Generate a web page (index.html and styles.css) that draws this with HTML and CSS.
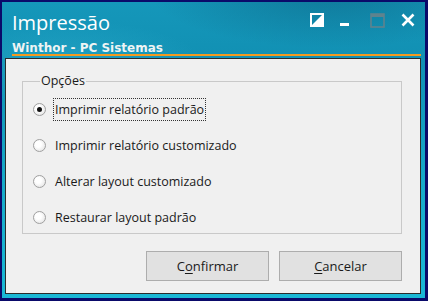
FILE: index.html
```html
<!DOCTYPE html>
<html lang="pt">
<head>
  <meta charset="UTF-8">
  <title>Impressão</title>
  <link rel="stylesheet" href="styles.css">
</head>
<body>

<!-- Janela de impressao -->
<div class="window">
  <div class="frame">
    <div class="titlebar">
      <div class="title-text">
        <h1 class="title">Impressão</h1>
        <div class="subtitle">Winthor - PC Sistemas</div>
      </div>
      <div class="title-buttons">
        <svg class="tb-icon" width="14" height="14" viewBox="0 0 14 14">
          <rect x="1" y="1" width="12" height="12" fill="none" stroke="#fff" stroke-width="2"/>
          <polygon points="13,1 13,13 1,13" fill="#fff"/>
        </svg>
        <svg class="tb-icon tb-min" width="10" height="14" viewBox="0 0 10 14">
          <rect x="0" y="10" width="9" height="3" fill="#fff"/>
        </svg>
        <svg class="tb-icon tb-max" width="15" height="15" viewBox="0 0 15 15">
          <rect x="1" y="1" width="13" height="13" fill="none" stroke="#5f838e" stroke-width="1.6"/>
          <rect x="1" y="1" width="13" height="3" fill="#5f838e"/>
        </svg>
        <svg class="tb-icon" width="14" height="14" viewBox="0 0 14 14">
          <path d="M1.5 1.5 L12.5 12.5 M12.5 1.5 L1.5 12.5" stroke="#fff" stroke-width="2.6"/>
        </svg>
      </div>
    </div>
    <div class="accent"></div>

    <div class="panel">
      <fieldset class="options">
        <legend>Opções</legend>
        <label class="option">
          <span class="radio checked"></span>
          <span class="label focus">Imprimir relatório padrão</span>
        </label>
        <label class="option">
          <span class="radio"></span>
          <span class="label">Imprimir relatório customizado</span>
        </label>
        <label class="option">
          <span class="radio"></span>
          <span class="label">Alterar layout customizado</span>
        </label>
        <label class="option">
          <span class="radio"></span>
          <span class="label">Restaurar layout padrão</span>
        </label>
      </fieldset>

      <div class="actions">
        <button class="btn">C<u>o</u>nfirmar</button>
        <button class="btn"><u>C</u>ancelar</button>
      </div>
    </div>
  </div>
</div>

</body>
</html>
```

FILE: styles.css
```css
/* --- Janela --- */
body {
  margin: 0;
  font-family: "Open Sans", "DejaVu Sans", sans-serif;
}

.window {
  width: 428px;
  height: 301px;
  box-sizing: border-box;
  background-color: #0a0a6a;
  padding: 2px 3px 3px 2px;
}

.frame {
  height: 100%;
  box-sizing: border-box;
  padding: 0 4px 4px 3px;
  display: flex;
  flex-direction: column;
  background:
    radial-gradient(ellipse 260px 80px at 330px -10px, rgba(10,90,120,0.5), rgba(10,90,120,0) 70%),
    radial-gradient(ellipse 200px 60px at 60px 60px, rgba(60,190,220,0.35), rgba(60,190,220,0) 70%),
    linear-gradient(180deg, #1597ba 0%, #1190b3 20%, #17a9c9 60%, #1ab8d6 100%);
}

/* --- Barra de titulo --- */
.titlebar {
  height: 52px;
  display: flex;
  justify-content: space-between;
  align-items: flex-start;
}

.title-text {
  padding-left: 7px;
}

.title {
  margin: 8px 0 0;
  font-family: "Open Sans", sans-serif;
  font-weight: normal;
  font-size: 20px;
  line-height: 26px;
  color: #fff;
}

.subtitle {
  margin-top: 5px;
  font-family: "DejaVu Sans", sans-serif;
  font-weight: bold;
  font-size: 12px;
  line-height: 14px;
  color: #eef4f4;
}

.title-buttons {
  display: flex;
  align-items: flex-start;
  gap: 14px;
  padding: 11px 6px 0 0;
}

.tb-min {
  margin: 0 2px;
}

.tb-max {
  margin: 0 2px 0 4px;
}

.accent {
  height: 2px;
  margin: 0 0 2px 7px;
  background-color: #f49a1e;
}

/* --- Painel --- */
.panel {
  flex: 1;
  background-color: #f0f0f0;
  border: 1px solid #2b2b2b;
  padding: 14px 18px 12px 16px;
  display: flex;
  flex-direction: column;
  font-family: "Open Sans", sans-serif;
  font-size: 12.5px;
  color: #1a1a1a;
}

.options {
  margin: 0;
  height: 161px;
  box-sizing: border-box;
  border: 1px solid #c9c9c9;
  padding: 2px 0 0 10px;
  display: flex;
  flex-direction: column;
}

.options legend {
  padding: 0 1px;
  margin-left: 7px;
  line-height: 16px;
}

.option {
  display: flex;
  align-items: center;
  height: 36px;
}

.radio {
  width: 11px;
  height: 11px;
  border: 1px solid #a0a0a0;
  border-radius: 50%;
  background: radial-gradient(circle at 40% 40%, #ffffff 30%, #dcdcdc 100%);
  margin-right: 7px;
  position: relative;
}

.radio.checked::after {
  content: "";
  position: absolute;
  left: 3px;
  top: 3px;
  width: 5px;
  height: 5px;
  border-radius: 50%;
  background-color: #111;
}

.label {
  padding: 2px 1px;
  border: 1px dotted transparent;
}

.label.focus {
  border-color: #333;
}

/* --- Botoes --- */
.actions {
  margin-top: auto;
  display: flex;
  justify-content: flex-end;
  gap: 10px;
}

.btn {
  width: 123px;
  height: 30px;
  font-family: "Open Sans", sans-serif;
  font-size: 13px;
  color: #1a1a1a;
  background-color: #e1e1e1;
  border: 1px solid #adadad;
  padding: 0;
}

.btn u {
  text-underline-offset: 2px;
}
```
